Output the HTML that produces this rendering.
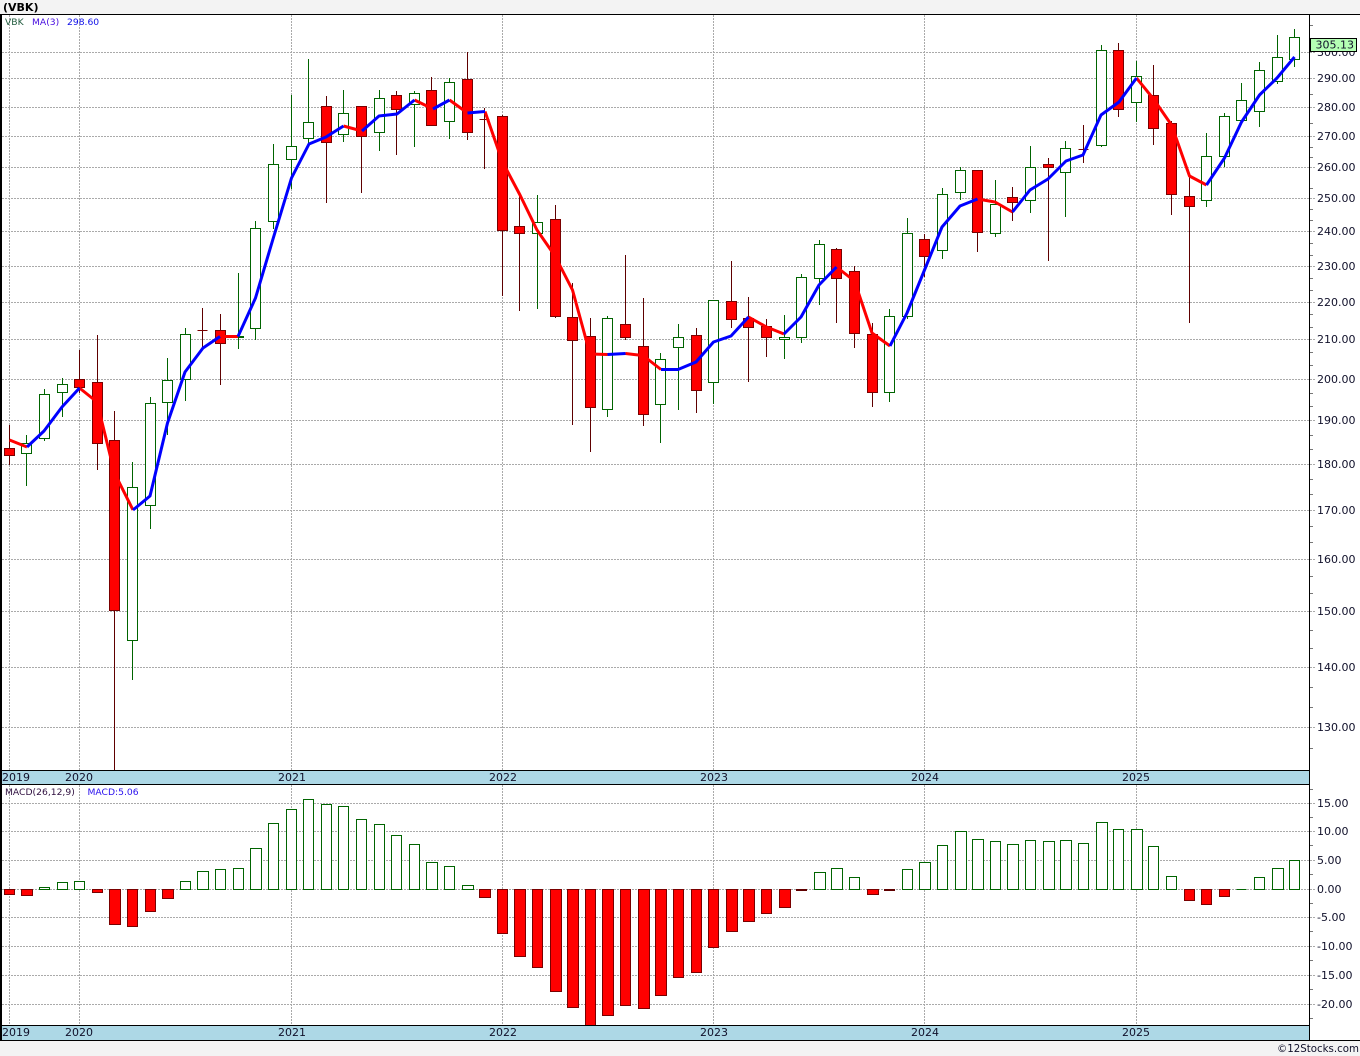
<!DOCTYPE html>
<html><head><meta charset="utf-8"><title>VBK</title>
<style>
html,body{margin:0;padding:0;background:#f3f3f3;width:1360px;height:1056px;overflow:hidden}
svg{display:block;position:absolute;left:0;top:0}
text{font-family:"DejaVu Sans",sans-serif;font-size:11px;fill:#10102a}
.s{font-size:9.2px}
</style></head><body>
<svg width="1360" height="1056" viewBox="0 0 1360 1056" xmlns="http://www.w3.org/2000/svg">
<rect x="0" y="0" width="1360" height="1056" fill="#f3f3f3"/>
<rect x="0" y="14" width="1360" height="1026" fill="#fff"/>
<text x="3" y="11" style="font-weight:bold;font-size:11px;fill:#000">(VBK)</text>

<!-- grid -->
<g shape-rendering="crispEdges" stroke="#aaaaaa" stroke-width="1" stroke-dasharray="2 1" fill="none">
<path d="M2 52.5H1316M2 78.5H1316M2 107.5H1316M2 136.5H1316M2 167.5H1316M2 198.5H1316M2 231.5H1316M2 266.5H1316M2 302.5H1316M2 339.5H1316M2 379.5H1316M2 420.5H1316M2 464.5H1316M2 510.5H1316M2 559.5H1316M2 611.5H1316M2 667.5H1316M2 727.5H1316"/>
<path d="M2 803.5H1316M2 831.5H1316M2 860.5H1316M2 889.5H1316M2 917.5H1316M2 946.5H1316M2 975.5H1316M2 1004.5H1316"/>
<path d="M9.5 15V770M79.5 15V770M291.5 15V770M502.5 15V770M713.5 15V770M924.5 15V770M1136.5 15V770"/>
<path d="M9.5 785V1025M79.5 785V1025M291.5 785V1025M502.5 785V1025M713.5 785V1025M924.5 785V1025M1136.5 785V1025"/>
</g>

<!-- date bars -->
<rect x="0" y="770" width="1310" height="15" fill="#add8e6"/>
<rect x="0" y="1025" width="1310" height="15" fill="#add8e6"/>

<!-- wicks -->
<g shape-rendering="crispEdges" fill="none" stroke-width="1">
<path stroke="#006400" d="M26.5 435V486M44.5 389V441M62.5 378V417M132.5 462V680M150.5 397V529M167.5 358V435M185.5 328V401M238.5 273V349M255.5 221V340M273.5 144V229M291.5 95V189M308.5 59V143M343.5 90V142M379.5 90V151M414.5 91V147M449.5 78V139M537.5 195V309M607.5 316V417M660.5 353V443M678.5 324V410M713.5 300V404M784.5 315V359M801.5 274V343M819.5 240V305M889.5 309V402M907.5 218V319M942.5 188V259M960.5 167V200M995.5 180V237M1030.5 146V213M1065.5 141V217M1101.5 45V147M1136.5 61V122M1206.5 133V207M1224.5 113V167M1241.5 83V120M1259.5 62V127M1277.5 35V84M1294.5 29V67"/>
<path stroke="#5f0000" d="M9.5 425V465M79.5 350V393M97.5 335V470M114.5 411V770M202.5 308V348M220.5 314V385M326.5 96V203M361.5 106V193M396.5 91V155M431.5 77V125M467.5 52V140M484.5 108V169M502.5 115V296M519.5 195V311M555.5 205V318M572.5 283V425M590.5 318V452M625.5 255V340M643.5 298V426M696.5 328V413M731.5 261V328M748.5 297V382M766.5 319V357M836.5 248V323M854.5 266V348M872.5 323V407M924.5 234V277M977.5 170V252M1012.5 187V221M1048.5 158V261M1083.5 125V163M1118.5 43V117M1153.5 65V145M1171.5 121V215M1189.5 176V323"/>

<!-- green candle bodies -->
<path fill="#fff" stroke="#006400" d="M21.5 443.5h10V453.5h-10zM39.5 394.5h10V438.5h-10zM57.5 384.5h10V392.5h-10zM127.5 487.5h10V640.5h-10zM145.5 403.5h10V505.5h-10zM162.5 380.5h10V402.5h-10zM180.5 334.5h10V379.5h-10zM233.5 336.5h10V337.5h-10zM250.5 228.5h10V328.5h-10zM268.5 164.5h10V221.5h-10zM286.5 146.5h10V159.5h-10zM303.5 122.5h10V138.5h-10zM338.5 113.5h10V134.5h-10zM374.5 98.5h10V132.5h-10zM409.5 93.5h10V104.5h-10zM444.5 82.5h10V121.5h-10zM532.5 222.5h10V233.5h-10zM602.5 318.5h10V409.5h-10zM655.5 359.5h10V404.5h-10zM673.5 337.5h10V347.5h-10zM708.5 300.5h10V382.5h-10zM779.5 337.5h10V339.5h-10zM796.5 277.5h10V337.5h-10zM814.5 244.5h10V278.5h-10zM884.5 316.5h10V392.5h-10zM902.5 233.5h10V316.5h-10zM937.5 194.5h10V250.5h-10zM955.5 170.5h10V192.5h-10zM990.5 204.5h10V233.5h-10zM1025.5 167.5h10V200.5h-10zM1060.5 148.5h10V172.5h-10zM1096.5 50.5h10V145.5h-10zM1131.5 76.5h10V102.5h-10zM1201.5 156.5h10V200.5h-10zM1219.5 116.5h10V156.5h-10zM1236.5 100.5h10V120.5h-10zM1254.5 70.5h10V111.5h-10zM1272.5 57.5h10V81.5h-10zM1289.5 37.5h10V59.5h-10z"/>

<!-- red candle bodies -->
<path fill="#ff0000" stroke="#7a0000" d="M4.5 448.5h10V455.5h-10zM74.5 379.5h10V387.5h-10zM92.5 382.5h10V443.5h-10zM109.5 440.5h10V610.5h-10zM197.5 330.5h10V330.5h-10zM215.5 330.5h10V343.5h-10zM321.5 106.5h10V142.5h-10zM356.5 106.5h10V136.5h-10zM391.5 95.5h10V109.5h-10zM426.5 90.5h10V125.5h-10zM462.5 79.5h10V132.5h-10zM479.5 119.5h10V119.5h-10zM497.5 116.5h10V230.5h-10zM514.5 226.5h10V233.5h-10zM550.5 219.5h10V316.5h-10zM567.5 317.5h10V340.5h-10zM585.5 336.5h10V407.5h-10zM620.5 324.5h10V337.5h-10zM638.5 346.5h10V414.5h-10zM691.5 335.5h10V390.5h-10zM726.5 301.5h10V319.5h-10zM743.5 318.5h10V327.5h-10zM761.5 326.5h10V337.5h-10zM831.5 249.5h10V278.5h-10zM849.5 271.5h10V333.5h-10zM867.5 334.5h10V392.5h-10zM919.5 239.5h10V256.5h-10zM972.5 170.5h10V232.5h-10zM1007.5 197.5h10V202.5h-10zM1043.5 164.5h10V167.5h-10zM1078.5 149.5h10V149.5h-10zM1113.5 50.5h10V109.5h-10zM1148.5 95.5h10V128.5h-10zM1166.5 123.5h10V194.5h-10zM1184.5 196.5h10V206.5h-10z"/>

<!-- MACD bars -->
<path fill="#fff" stroke="#006400" d="M39.5 887.5h10V889.5h-10zM57.5 882.5h10V889.5h-10zM74.5 881.5h10V889.5h-10zM180.5 881.5h10V889.5h-10zM197.5 871.5h11V889.5h-11zM215.5 869.5h10V889.5h-10zM233.5 868.5h10V889.5h-10zM250.5 848.5h11V889.5h-11zM268.5 823.5h10V889.5h-10zM286.5 809.5h10V889.5h-10zM303.5 799.5h10V889.5h-10zM321.5 804.5h10V889.5h-10zM338.5 806.5h10V889.5h-10zM356.5 819.5h10V889.5h-10zM374.5 824.5h10V889.5h-10zM391.5 835.5h10V889.5h-10zM409.5 844.5h10V889.5h-10zM426.5 862.5h11V889.5h-11zM444.5 866.5h10V889.5h-10zM462.5 885.5h11V889.5h-11zM814.5 872.5h11V889.5h-11zM831.5 868.5h11V889.5h-11zM849.5 877.5h10V889.5h-10zM902.5 869.5h10V889.5h-10zM919.5 862.5h11V889.5h-11zM937.5 845.5h10V889.5h-10zM955.5 831.5h11V889.5h-11zM972.5 839.5h11V889.5h-11zM990.5 841.5h10V889.5h-10zM1007.5 844.5h11V889.5h-11zM1025.5 840.5h10V889.5h-10zM1043.5 841.5h11V889.5h-11zM1060.5 840.5h11V889.5h-11zM1078.5 843.5h10V889.5h-10zM1096.5 822.5h11V889.5h-11zM1113.5 829.5h10V889.5h-10zM1131.5 829.5h11V889.5h-11zM1148.5 846.5h10V889.5h-10zM1166.5 876.5h10V889.5h-10zM1236.5 889.5h10V889.5h-10zM1254.5 877.5h10V889.5h-10zM1272.5 868.5h11V889.5h-11zM1289.5 860.5h10V889.5h-10z"/>
<path fill="#ff0000" stroke="#7a0000" d="M4.5 889.5h10V894.5h-10zM21.5 889.5h11V895.5h-11zM92.5 889.5h10V892.5h-10zM109.5 889.5h11V924.5h-11zM127.5 889.5h10V926.5h-10zM145.5 889.5h10V911.5h-10zM162.5 889.5h11V898.5h-11zM479.5 889.5h11V897.5h-11zM497.5 889.5h10V933.5h-10zM514.5 889.5h11V956.5h-11zM532.5 889.5h10V967.5h-10zM550.5 889.5h11V991.5h-11zM567.5 889.5h11V1007.5h-11zM585.5 889.5h10V1025.5h-10zM602.5 889.5h11V1015.5h-11zM620.5 889.5h10V1005.5h-10zM638.5 889.5h11V1008.5h-11zM655.5 889.5h11V995.5h-11zM673.5 889.5h10V977.5h-10zM691.5 889.5h10V972.5h-10zM708.5 889.5h10V947.5h-10zM726.5 889.5h11V931.5h-11zM743.5 889.5h11V921.5h-11zM761.5 889.5h10V913.5h-10zM779.5 889.5h11V907.5h-11zM867.5 889.5h11V894.5h-11zM1184.5 889.5h10V900.5h-10zM1201.5 889.5h10V904.5h-10zM1219.5 889.5h10V896.5h-10z"/>
<path fill="#5f0000" stroke="#5f0000" d="M796.5 889.5h10V890.5h-10zM884.5 889.5h10V890.5h-10z"/>
</g>

<!-- MA(3) -->
<g fill="none" stroke-width="3" stroke-linejoin="round" stroke-linecap="butt">
<path stroke="#ff0000" d="M9.5 440L27 447M79.5 388L97 402L114.5 473L133 510M220 336.5L238 336.5M343.5 126L362 131M414.5 100L433 109M449.5 100L467.5 113M485 111.5L502.5 162L520 195L537 230L555 256L572.5 290L590 354L607.5 354.5M625.5 353.5L643 355.5L661 369.5M748.5 317L766.5 327L784 334M836.5 267L854.5 281L872 333L890 346M977.5 199L995 202L1012.5 212M1136.5 78L1153.5 99L1171.5 125L1189.5 176L1206.5 185"/>
<path stroke="#0000ff" d="M27 447L44 431L62 407L79.5 388M133 510L150 496L167.5 423L185 372L203 348L220 336.5M238 336.5L255.5 298L273 239L291.5 178L309 144L326 137L343.5 126M362 131L379 116L397 114L414.5 100M433 109L449.5 100M467.5 113L485 111.5M607.5 354.5L625.5 353.5M661 369.5L678 369.5L696 362L713.5 342L731 336L748.5 317M784 334L801 317L819 285L836.5 267M890 346L907 313L924.5 270L942 227L960 206L977.5 199M1012.5 212L1030 190L1048 179L1066 161L1083 155L1101 115L1119 102L1136.5 78M1206.5 185L1224.5 158L1241.5 122L1259.5 95L1277 78L1294.5 57"/>
</g>

<!-- frame -->
<g shape-rendering="crispEdges">
<rect x="0" y="14" width="1360" height="1" fill="#000"/>
<rect x="0" y="14" width="2" height="1026" fill="#000"/>
<rect x="0" y="770" width="1310" height="1" fill="#000"/>
<rect x="0" y="784" width="1310" height="1" fill="#000"/>
<rect x="0" y="1025" width="1310" height="1" fill="#000"/>
<rect x="0" y="1040" width="1360" height="1" fill="#000"/>
<rect x="1309" y="14" width="1" height="1026" fill="#000"/>
<path stroke="#777" stroke-width="1" fill="none" d="M1310 25.5h3M1310 94.5h3M1310 123.5h3M1310 147.5h3M1310 157.5h3M1310 188.5h3M1310 209.5h3M1310 220.5h3M1310 243.5h3M1310 255.5h3M1310 278.5h3M1310 290.5h3M1310 314.5h3M1310 327.5h3M1310 352.5h3M1310 365.5h3M1310 393.5h3M1310 406.5h3M1310 435.5h3M1310 449.5h3M1310 479.5h3M1310 494.5h3M1310 526.5h3M1310 542.5h3M1310 576.5h3M1310 593.5h3M1310 630.5h3M1310 648.5h3M1310 687.5h3M1310 707.5h3M1310 748.5h3M1310 789.5h3M1310 817.5h3M1310 845.5h3M1310 874.5h3M1310 903.5h3M1310 931.5h3M1310 960.5h3M1310 989.5h3M1310 1018.5h3"/>
</g>

<!-- labels -->
<text x="5" y="25" class="s" style="fill:#1f5a3c">VBK</text>
<text x="32" y="25" class="s" style="fill:#4a10e0">MA(3)</text>
<text x="67" y="25" class="s" style="fill:#1010e8">298.60</text>
<text x="5" y="795" class="s" style="fill:#301040">MACD(26,12,9)</text>
<text x="87.5" y="795" class="s" style="fill:#2a10ee">MACD:5.06</text>

<text x="1317" y="56">300.00</text>
<text x="1317" y="82">290.00</text>
<text x="1317" y="111">280.00</text>
<text x="1317" y="140">270.00</text>
<text x="1317" y="171">260.00</text>
<text x="1317" y="202">250.00</text>
<text x="1317" y="235">240.00</text>
<text x="1317" y="270">230.00</text>
<text x="1317" y="306">220.00</text>
<text x="1317" y="343">210.00</text>
<text x="1317" y="383">200.00</text>
<text x="1317" y="424">190.00</text>
<text x="1317" y="468">180.00</text>
<text x="1317" y="514">170.00</text>
<text x="1317" y="563">160.00</text>
<text x="1317" y="615">150.00</text>
<text x="1317" y="671">140.00</text>
<text x="1317" y="731">130.00</text>

<rect x="1310.5" y="38.5" width="46" height="13" fill="#b4ffb4" stroke="#000" shape-rendering="crispEdges"/>
<text x="1315.5" y="48.5">305.13</text>

<text x="1317" y="807">15.00</text>
<text x="1317" y="835">10.00</text>
<text x="1317" y="864">5.00</text>
<text x="1317" y="893">0.00</text>
<text x="1317" y="921">-5.00</text>
<text x="1317" y="950">-10.00</text>
<text x="1317" y="979">-15.00</text>
<text x="1317" y="1008">-20.00</text>

<text x="2" y="781">2019</text>
<text x="65" y="781">2020</text>
<text x="278" y="781">2021</text>
<text x="489" y="781">2022</text>
<text x="700" y="781">2023</text>
<text x="911" y="781">2024</text>
<text x="1122" y="781">2025</text>

<text x="2" y="1036">2019</text>
<text x="65" y="1036">2020</text>
<text x="278" y="1036">2021</text>
<text x="489" y="1036">2022</text>
<text x="700" y="1036">2023</text>
<text x="911" y="1036">2024</text>
<text x="1122" y="1036">2025</text>

<text x="1277" y="1052" textLength="82" lengthAdjust="spacingAndGlyphs">©12Stocks.com</text>
</svg>
</body></html>
